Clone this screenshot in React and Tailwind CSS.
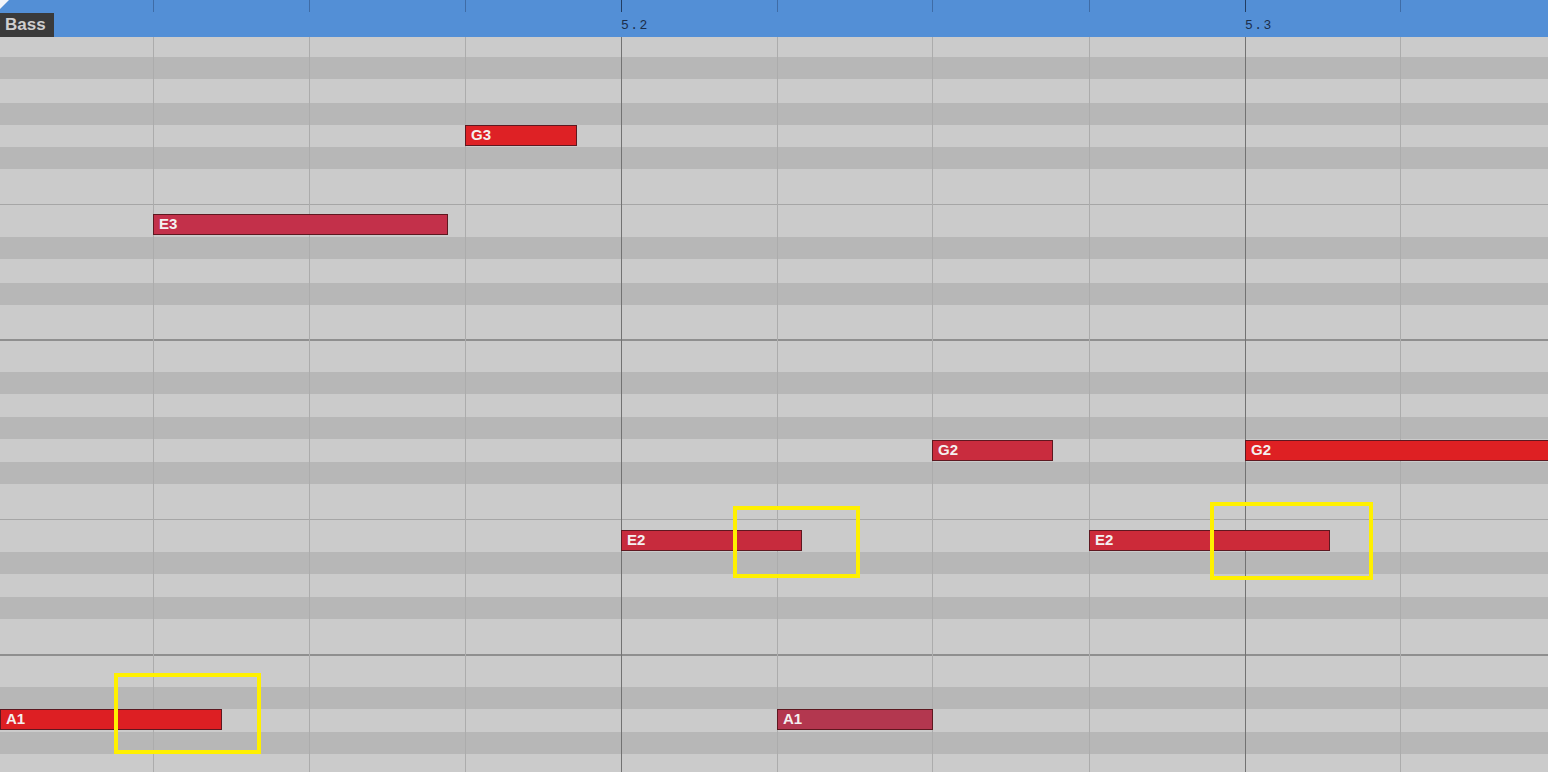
import React from 'react';

// piano-roll lanes from top of the grid, heights in px
const lanes = [
  { h: 20, black: false },
  { h: 22, black: true },
  { h: 24, black: false },
  { h: 22, black: true },
  { h: 22, black: false },
  { h: 22, black: true },
  { h: 35, black: false },
  { h: 33, black: false, line: 'e' },
  { h: 22, black: true },
  { h: 24, black: false },
  { h: 22, black: true },
  { h: 34, black: false },
  { h: 33, black: false, line: 'b' },
  { h: 22, black: true },
  { h: 23, black: false },
  { h: 22, black: true },
  { h: 23, black: false },
  { h: 22, black: true },
  { h: 35, black: false },
  { h: 33, black: false, line: 'e' },
  { h: 22, black: true },
  { h: 23, black: false },
  { h: 22, black: true },
  { h: 35, black: false },
  { h: 33, black: false, line: 'b' },
  { h: 22, black: true },
  { h: 23, black: false },
  { h: 22, black: true },
  { h: 18, black: false },
];

// beat columns; "bar" marks the start of a bar
const columns = [
  { w: 153 },
  { w: 156 },
  { w: 156 },
  { w: 156 },
  { w: 156, bar: '5.2' },
  { w: 155 },
  { w: 157 },
  { w: 156 },
  { w: 155, bar: '5.3' },
  { w: 148 },
];

const notes = [
  { name: 'G3', x: 465, y: 88, w: 112, color: '#de2125' },
  { name: 'E3', x: 153, y: 177, w: 295, color: '#c3304a' },
  { name: 'G2', x: 932, y: 403, w: 121, color: '#c92c3e' },
  { name: 'G2', x: 1245, y: 403, w: 310, color: '#de2023' },
  { name: 'E2', x: 621, y: 493, w: 181, color: '#c72b3d' },
  { name: 'E2', x: 1089, y: 493, w: 241, color: '#cc2a39' },
  { name: 'A1', x: 0, y: 672, w: 222, color: '#dd1f23' },
  { name: 'A1', x: 777, y: 672, w: 156, color: '#b3374f' },
];

const marks = [
  { x: 114, y: 636, w: 147, h: 81 },
  { x: 733, y: 469, w: 127, h: 72 },
  { x: 1210, y: 465, w: 163, h: 78 },
];

function Ruler() {
  return (
    <div className="relative flex h-[37px] bg-[#538fd6]">
      {columns.map((col, i) => (
        <div
          key={i}
          className={i === columns.length - 1 ? 'relative flex-1' : 'relative shrink-0'}
          style={i === columns.length - 1 ? undefined : { width: col.w }}
        >
          {i > 0 && (
            <div className={`h-[12px] w-px ${col.bar ? 'bg-[#213d63]' : 'bg-[#3f6ca6]'}`} />
          )}
          {col.bar && (
            <span className="absolute left-0 top-[19px] font-['Liberation_Mono',monospace] text-[13px] leading-none tracking-[1.5px] text-[#1b2e4b]">
              {col.bar}
            </span>
          )}
          {i === 0 && (
            <>
              <svg className="absolute left-0 top-0" width="12" height="12" viewBox="0 0 12 12">
                <polygon points="0,0 9,0 0,9" fill="#f4f6fa" />
              </svg>
              <div className="absolute bottom-0 left-0 flex h-[24px] w-[54px] items-center bg-[#3a3a3a] pl-[5px] font-['Liberation_Sans',Arial,sans-serif] text-[17px] font-bold text-[#cfcfcf]">
                Bass
              </div>
            </>
          )}
        </div>
      ))}
    </div>
  );
}

function Grid() {
  return (
    <div className="relative flex-1 overflow-hidden">
      {/* lanes */}
      <div className="flex flex-col">
        {lanes.map((lane, i) => (
          <div
            key={i}
            className={`${lane.black ? 'bg-[#b7b7b7]' : 'bg-[#cbcbcb]'} ${
              lane.line === 'b' ? 'border-t-2 border-[#8f8f8f]' : lane.line === 'e' ? 'border-t border-[#a6a6a6]' : ''
            }`}
            style={{ height: lane.h }}
          />
        ))}
      </div>

      {/* beat lines */}
      <div className="pointer-events-none absolute inset-0 flex">
        {columns.map((col, i) => (
          <div
            key={i}
            className={`${i === columns.length - 1 ? 'flex-1' : 'shrink-0'} ${
              i === 0 ? '' : col.bar ? 'border-l border-[#727272]' : 'border-l border-[#acacac]'
            }`}
            style={i === columns.length - 1 ? undefined : { width: col.w }}
          />
        ))}
      </div>

      {/* notes */}
      {notes.map((n, i) => (
        <div
          key={i}
          className="absolute flex h-[21px] items-center border border-[#5e1820] pl-[5px] font-['Liberation_Sans',Arial,sans-serif] text-[15px] font-bold text-[#f4f0f0]"
          style={{ left: n.x, top: n.y, width: n.w, backgroundColor: n.color }}
        >
          {n.name}
        </div>
      ))}

      {/* highlight boxes */}
      {marks.map((m, i) => (
        <div
          key={i}
          className="absolute border-[4px] border-[#fff000]"
          style={{ left: m.x, top: m.y, width: m.w, height: m.h }}
        />
      ))}
    </div>
  );
}

export default function App() {
  return (
    <div className="flex h-[772px] w-[1548px] flex-col overflow-hidden bg-[#cbcbcb]">
      <Ruler />
      <Grid />
    </div>
  );
}
